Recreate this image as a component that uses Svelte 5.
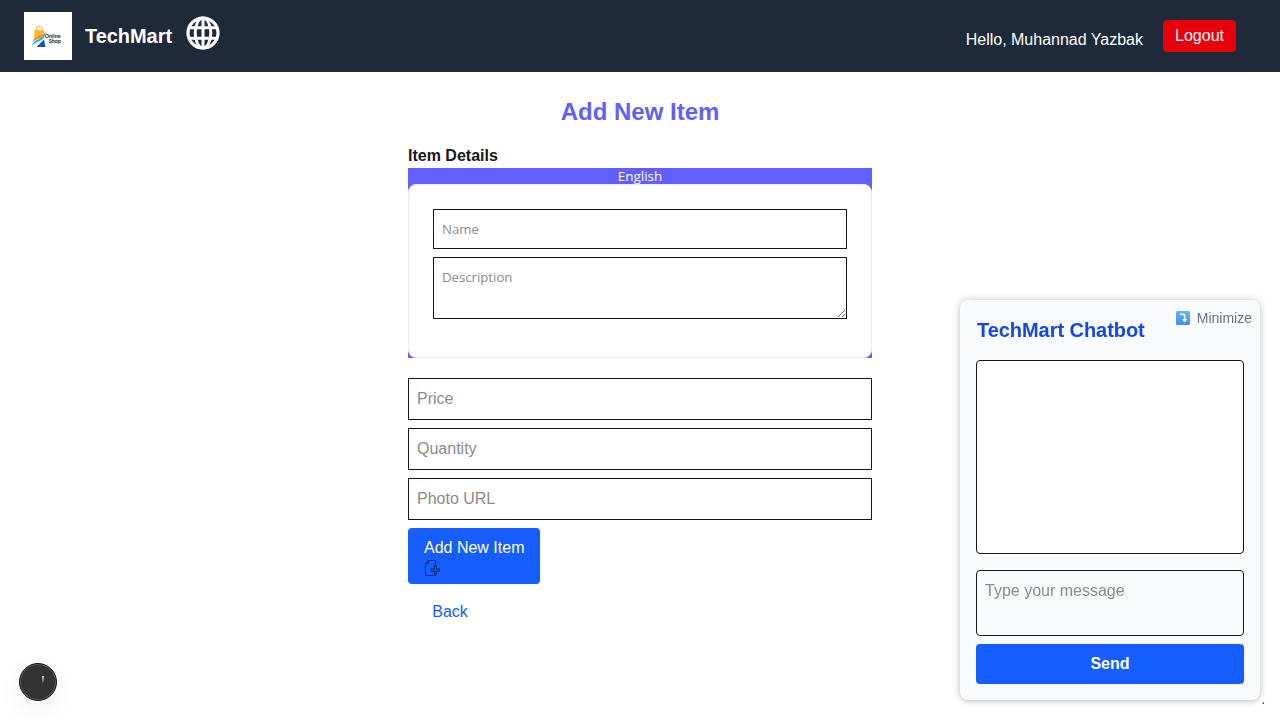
<script>
  let name = $state('');
  let description = $state('');
  let message = $state('');
  const fields = ['Price', 'Quantity', 'Photo URL'];
</script>

<header>
  <svg class="logo" viewBox="0 0 48 48">
    <rect width="48" height="48" fill="#fff" />
    <path d="M10.500 18.200 L19.800 18 L20.500 20 L17 24 L10 27.500 Z" fill="#fdb92e" />
    <path d="M12.500 18.500 V16.500 Q12.500 14.500 15 14.500 Q17.800 14.500 17.800 16.500 V18.500" fill="none" stroke="#f8b322" stroke-width="1.100" />
    <path d="M8.500 29.500 Q10 26.500 14 24.800 Q18.500 23 22.300 19.500 Q21.500 23 18 25.300 Q12.500 27 8.500 29.500Z" fill="#f47b2c" />
    <path d="M7.500 33.500 Q9.500 29 14 27.500 Q18.500 25.500 21 22.800 Q20.500 26 17 28.200 Q12 30 7.500 33.500Z" fill="#1dafe0" />
    <path d="M12.500 35 L20 27.500 L21.500 35Z" fill="#1454b0" />
    <text x="20.800" y="25.500" class="brand" textLength="15.700" lengthAdjust="spacingAndGlyphs">Online</text>
    <text x="24.700" y="30.500" class="brand" textLength="12.300" lengthAdjust="spacingAndGlyphs">Shop</text>
    <path d="M25 31.800H37" stroke="#ddd" stroke-width=".6" />
  </svg>
  <h1>TechMart</h1>
  <svg class="globe" viewBox="0 0 34 34" fill="none" stroke="#fff" stroke-width="3.200">
    <circle cx="17" cy="17" r="15" />
    <ellipse cx="17" cy="17" rx="7.800" ry="15" stroke-width="3" />
    <path d="M17 2V32M3.500 11.700H30.500M3.500 22.300H30.500" stroke-width="3" />
  </svg>
  <span class="hello">Hello, Muhannad Yazbak</span>
  <button class="logout">Logout</button>
</header>

<main>
  <h2>Add New Item</h2>
  <h3>Item Details</h3>
  <section class="language">
    <div class="tab">English</div>
    <div class="panel">
      <input class="small" placeholder="Name" bind:value={name} />
      <textarea class="small" placeholder="Description" bind:value={description}></textarea>
    </div>
  </section>
  {#each fields as field}
    <input class="field" placeholder={field} />
  {/each}
  <button class="add">
    <span>Add New Item</span>
    <svg viewBox="0 0 16 16" fill="none" stroke="#0b2a6b" stroke-width=".9">
      <path d="M11.500 5.500V1.500Q11.500.5 10.500.5H4.500L1.500 3.500V14.500Q1.500 15.500 2.500 15.500H10.500Q11.500 15.500 11.500 14.500V14" />
      <path d="M4.500.5V3.500H1.500" />
      <path d="M10.500 6H12.500V9H15.500V11H12.500V14H10.500V11H7.500V9H10.500Z" stroke-width="1.200" />
    </svg>
  </button>
  <a href="#back">Back</a>
</main>

<aside>
  <button class="minimize">
    <svg viewBox="0 0 14 14">
      <defs>
        <linearGradient id="tile" x1="0" y1="0" x2="0" y2="1">
          <stop offset="0" stop-color="#68b4fa" />
          <stop offset="1" stop-color="#438fe8" />
        </linearGradient>
      </defs>
      <rect width="14" height="14" rx="1.500" fill="url(#tile)" />
      <path d="M4 3.300H6.500Q8.700 3.300 8.700 5V9" fill="none" stroke="#fff" stroke-width="1.500" />
      <path d="M6 8.200H11.400L8.700 11.500Z" fill="#fff" />
    </svg>
    Minimize
  </button>
  <h2>TechMart Chatbot</h2>
  <div class="messages"></div>
  <textarea class="message" placeholder="Type your message" bind:value={message}></textarea>
  <button class="send">Send</button>
</aside>
<span class="dot">.</span>
<div class="bubble"><i></i></div>

<style>
  :global(body) {
    height: 720px;
    overflow: hidden;
    background: #fff;
    color: #171717;
    font: 16px/24px "Liberation Sans", Arial, sans-serif;
  }
  * { box-sizing: border-box; }
  h1, h2, h3 { margin: 0; }
  button { border: 0; font: inherit; color: #fff; padding: 0; }
  input, textarea {
    display: block;
    width: 100%;
    margin: 0;
    padding: 8px;
    border: 1px solid #171717;
    border-radius: 0;
    background: transparent;
    font: inherit;
    outline: 0;
  }
  input::placeholder, textarea::placeholder { color: #8b8b8b; opacity: 1; }

  header {
    display: flex;
    align-items: flex-start;
    height: 72px;
    padding: 12px 44px 0 24px;
    background: #1e2939;
    color: #fff;
  }
  .logo { width: 48px; height: 48px; }
  .brand { font: bold 5.500px Lato, sans-serif; fill: #222; }
  h1 { margin: 10px 0 0 13px; font-size: 20px; line-height: 28px; letter-spacing: -.05px; }
  .globe { width: 34px; height: 34px; margin: 4px 0 0 14px; }
  .hello { margin: 16px 20px 0 auto; }
  .logout {
    width: 73px;
    height: 32px;
    margin-top: 8px;
    border-radius: 4px;
    background: #e7000b;
  }

  main { width: 464px; margin: 24px auto 0; }
  main h2 { color: #615fff; font-size: 24px; line-height: 32px; text-align: center; }
  h3 { margin-top: 16px; font-size: 16px; line-height: 24px; }
  .language {
    height: 190px;
    margin-bottom: 20px;
    background: #615fff;
    font: 13.500px/16px "Open Sans", sans-serif;
  }
  .tab { height: 16px; color: #fff; text-align: center; }
  .panel {
    height: 174px;
    padding: 24px;
    border: 1px solid #ebebef;
    border-radius: 8px;
    background: #fff;
  }
  .small { height: 40px; margin-bottom: 8px; font-size: 13.200px; line-height: 22px; }
  textarea.small { height: 62px; }
  .field { height: 42px; margin-bottom: 8px; }
  .add {
    display: flex;
    flex-direction: column;
    width: 132px;
    height: 56px;
    padding: 8px 16px;
    border-radius: 4px;
    background: #155dfc;
    line-height: 24px;
    white-space: nowrap;
  }
  .add span { height: 24px; }
  .add svg { flex: none; width: 16px; height: 16px; }
  a { display: block; width: 84px; margin-top: 16px; color: #155dfc; text-align: center; text-decoration: none; }

  aside {
    position: fixed;
    right: 20px;
    bottom: 20px;
    width: 300px;
    height: 400px;
    padding: 16px;
    border-radius: 8px;
    background: #f9fafb;
    box-shadow: 0 0 10px rgba(0, 0, 0, .2), 0 2px 4px rgba(0, 0, 0, .1);
  }
  aside h2 { padding-left: 1px; color: #1447e6; font-size: 20px; line-height: 28px; letter-spacing: -.05px; }
  .minimize {
    position: absolute;
    top: 8px;
    right: 8px;
    display: flex;
    align-items: center;
    gap: 7px;
    background: none;
    color: #6a7282;
    font-size: 14px;
    line-height: 20px;
  }
  .minimize svg { width: 14px; height: 14px; }
  .messages {
    height: 194px;
    margin: 16px 0;
    border: 1px solid #171717;
    border-radius: 4px;
    background: #fff;
  }
  .message { height: 66px; margin-bottom: 8px; border-radius: 4px; resize: none; }
  .send { width: 100%; height: 40px; border-radius: 4px; background: #155dfc; font-weight: bold; }
  .dot { position: fixed; left: 1261px; top: 687px; color: #666; }
  .bubble {
    position: fixed;
    left: 19px;
    bottom: 19px;
    width: 38px;
    height: 38px;
    border: 1px solid #171717;
    border-radius: 50%;
    background: #333;
    box-shadow: inset 0 0 0 1px #5a5a5a, 0 10px 30px rgba(0, 0, 0, .06);
  }
  .bubble i {
    position: absolute;
    left: 22px;
    top: 12px;
    width: 2px;
    height: 7px;
    background: linear-gradient(#ccc, #444);
  }
</style>
